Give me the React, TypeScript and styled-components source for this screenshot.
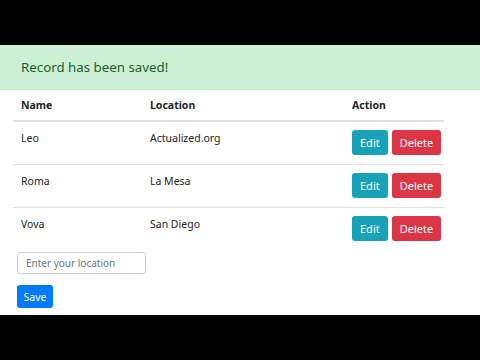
import React from "react";
import styled, { createGlobalStyle } from "styled-components";

const Global = createGlobalStyle`
  html, body { margin: 0; padding: 0; background: #000; }
  body { font-family: "Noto Sans", "Open Sans", sans-serif; color: #212529; }
  * { box-sizing: border-box; }
`;

const Frame = styled.div`
  width: 480px;
  height: 360px;
  padding: 45px 0;
  background: #000;
`;

const Screen = styled.div`
  height: 270px;
  background: #fff;
  overflow: hidden;
`;

const Alert = styled.div`
  height: 45px;
  display: flex;
  align-items: center;
  padding-left: 21px;
  background: #cdf0d5;
  border-bottom: 1px solid #c3e6cb;
  color: #1a5e2c;
  font-size: 13.3px;
`;

const Table = styled.table`
  margin: 0 13px;
  width: 431px;
  border-collapse: collapse;
  table-layout: fixed;
  font-size: 10.5px;
`;

const Th = styled.th<{ $w: number }>`
  width: ${(p) => p.$w}px;
  height: 31px;
  padding: 0 8px;
  text-align: left;
  vertical-align: middle;
  font-weight: 700;
  border-bottom: 2px solid #dee2e6;
`;

const Td = styled.td`
  padding: 8px 8px 9px;
  vertical-align: top;
  line-height: 17px;
`;

const Row = styled.tr<{ $first?: boolean }>`
  border-top: ${(p) => (p.$first ? "0" : "1px solid #dee2e6")};
`;

const Actions = styled.div`
  display: flex;
  gap: 4px;
`;

const Btn = styled.button<{ $bg: string }>`
  height: 25px;
  padding: 0 8px;
  border: 0;
  border-radius: 3px;
  background: ${(p) => p.$bg};
  color: #fff;
  font-family: inherit;
  font-size: 11px;
  line-height: 25px;
`;

const Form = styled.div`
  padding: 2px 17px 0;
  display: flex;
  flex-direction: column;
  align-items: flex-start;
  gap: 11px;
`;

const Input = styled.input`
  width: 129px;
  height: 22px;
  padding: 0 8px;
  border: 1px solid #ced4da;
  border-radius: 3px;
  font-family: inherit;
  font-size: 10px;
  color: #495057;
  &::placeholder { color: #6c757d; }
`;

const SaveBtn = styled.button`
  width: 36px;
  height: 23px;
  padding: 0;
  border: 0;
  border-radius: 3px;
  background: #007bff;
  color: #fff;
  font-family: inherit;
  font-size: 10.5px;
`;

const rows = [
  { name: "Leo", location: "Actualized.org" },
  { name: "Roma", location: "La Mesa" },
  { name: "Vova", location: "San Diego" },
];

export default function App() {
  return (
    <Frame>
      <Global />
      <Screen>
        <Alert>Record has been saved!</Alert>
        <Table>
          <thead>
            <tr>
              <Th $w={129}>Name</Th>
              <Th $w={202}>Location</Th>
              <Th $w={100}>Action</Th>
            </tr>
          </thead>
          <tbody>
            {rows.map((r, i) => (
              <Row key={r.name} $first={i === 0}>
                <Td>{r.name}</Td>
                <Td>{r.location}</Td>
                <Td>
                  <Actions>
                    <Btn $bg="#17a2b8">Edit</Btn>
                    <Btn $bg="#dc3545">Delete</Btn>
                  </Actions>
                </Td>
              </Row>
            ))}
          </tbody>
        </Table>
        <Form>
          <Input placeholder="Enter your location" />
          <SaveBtn>Save</SaveBtn>
        </Form>
      </Screen>
    </Frame>
  );
}
